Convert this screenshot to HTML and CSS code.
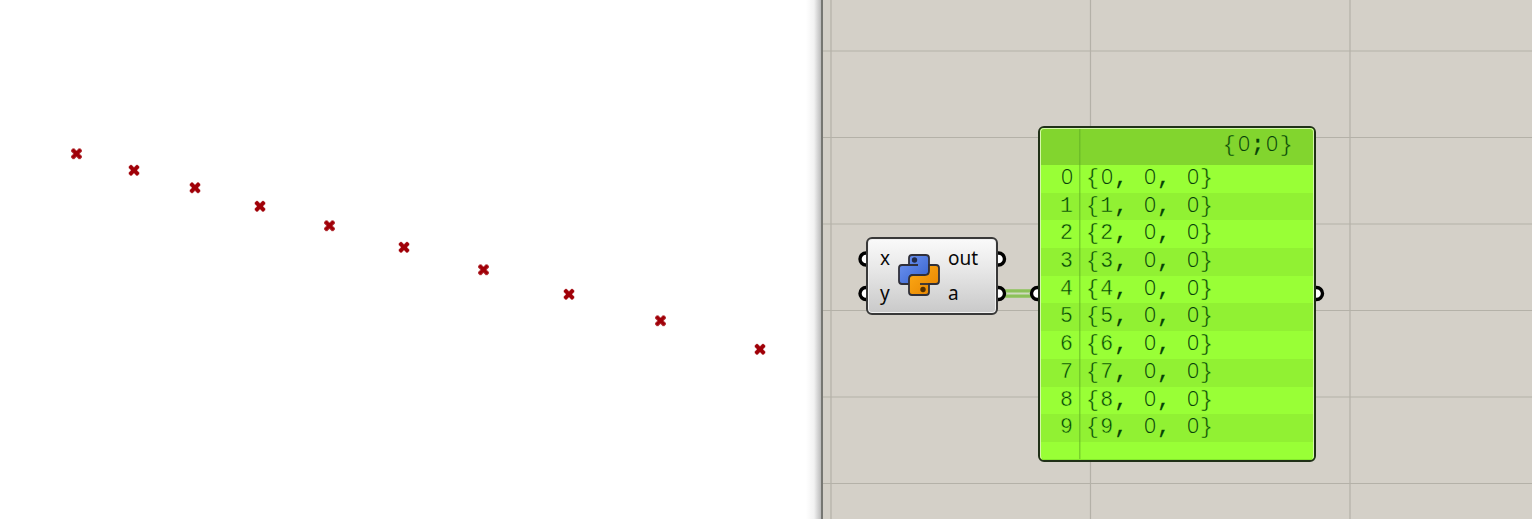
FILE: index.html
```html
<!DOCTYPE html>
<html lang="en">
<head>
<meta charset="utf-8">
<title>Point list</title>
<link rel="stylesheet" href="styles.css">
</head>
<body>
<main class="app">
<section class="viewport">
<svg width="821" height="519" viewBox="0 0 821 519">
<defs><path id="pt" class="point" d="M-4-5.500h2v1h1v1h2v-1h1v-1h2v1h1v2h-1v1h-1v2h1v1h1v2h-1v1h-2v-1h-1v-1h-2v1h-1v1h-2v-1h-1v-2h1v-1h1v-2h-1v-1h-1v-2h1z"/></defs>
<use href="#pt" x="76.500" y="154.300"/><use href="#pt" x="134" y="170.800"/><use href="#pt" x="195" y="188.300"/><use href="#pt" x="260" y="206.800"/><use href="#pt" x="329.500" y="226.300"/><use href="#pt" x="404" y="247.800"/><use href="#pt" x="483.500" y="270.300"/><use href="#pt" x="569" y="294.800"/><use href="#pt" x="660.500" y="321.300"/><use href="#pt" x="760" y="349.800"/>
</svg>
</section>
<section class="canvas">
<svg class="wires" width="711" height="519" viewBox="821 0 711 519">
<path class="grid" d="M821 51H1532M821 137.500H1532M821 224H1532M821 310.500H1532M821 397H1532M821 483.500H1532M831 0V519M1090.500 0V519M1350 0V519"/>
<path class="edge" d="M822 0V519"/>
<path class="gap" d="M1000 293.500H1036"/><path class="wire" d="M1000 290.900H1036M1000 296.100H1036"/>
<g class="port"><circle cx="866" cy="259" r="6"/><circle cx="866" cy="293.500" r="6"/><circle cx="998.500" cy="259" r="6"/><circle cx="998.500" cy="293.500" r="6"/><circle cx="1037.500" cy="293.500" r="6"/><circle cx="1316.500" cy="293.500" r="6"/></g>
</svg>
<div class="component">
<div class="params in"><span>x</span><span>y</span></div>
<svg class="logo" width="42" height="42" viewBox="0 0 42 42">
<defs><linearGradient id="blue" x2="1" y2="1"><stop stop-color="#7298f5"/><stop offset="1" stop-color="#3460cb"/></linearGradient><linearGradient id="gold" x2="1" y2="1"><stop stop-color="#ffad17"/><stop offset="1" stop-color="#e58200"/></linearGradient></defs>
<path fill="url(#blue)" d="M11 11V4Q11 1 14 1H28Q31 1 31 4V18Q31 21 28 21H15Q12 21 12 25V30H4Q1 30 1 27V14Q1 11 4 11H20"/>
<path fill="url(#gold)" d="M31 11H38Q41 11 41 14V27Q41 30 38 30H31V38Q31 41 28 41H14Q11 41 11 38V25Q11 21 15 21H27Q31 21 31 17Z"/>
<path class="seam" d="M22 30H31"/><circle cx="16.500" cy="6" r="2.700" fill="#222b48" stroke="none"/><circle cx="25" cy="35.500" r="2.700" fill="#553000" stroke="none"/>
</svg>
<div class="params"><span>out</span><span>a</span></div>
</div>
<div class="panel">
<div class="path">{<i>0</i><u>;</u><i>0</i>}</div>
<div class="row"><b><i>0</i></b><span>{<i>0</i><u>,</u> <i>0</i><u>,</u> <i>0</i>}</span></div>
<div class="row"><b>1</b><span>{1<u>,</u> <i>0</i><u>,</u> <i>0</i>}</span></div>
<div class="row"><b>2</b><span>{2<u>,</u> <i>0</i><u>,</u> <i>0</i>}</span></div>
<div class="row"><b>3</b><span>{3<u>,</u> <i>0</i><u>,</u> <i>0</i>}</span></div>
<div class="row"><b>4</b><span>{4<u>,</u> <i>0</i><u>,</u> <i>0</i>}</span></div>
<div class="row"><b>5</b><span>{5<u>,</u> <i>0</i><u>,</u> <i>0</i>}</span></div>
<div class="row"><b>6</b><span>{6<u>,</u> <i>0</i><u>,</u> <i>0</i>}</span></div>
<div class="row"><b>7</b><span>{7<u>,</u> <i>0</i><u>,</u> <i>0</i>}</span></div>
<div class="row"><b>8</b><span>{8<u>,</u> <i>0</i><u>,</u> <i>0</i>}</span></div>
<div class="row"><b>9</b><span>{9<u>,</u> <i>0</i><u>,</u> <i>0</i>}</span></div>
</div>
</section>
</main>
</body>
</html>
```
FILE: styles.css
```css
* { box-sizing: border-box; }
body { margin: 0; overflow: hidden; background: #fff; }
.app { display: grid; grid-template-columns: 821px 711px; height: 519px; }
.viewport { background: linear-gradient(90deg, #fff 806px, #f2f2f2 814px, #bbb 821px); }
svg { display: block; }
.point { fill: #a00008; stroke: #a00008; stroke-width: .5; }
.canvas { position: relative; background: #d4d0c8; }
.wires { position: absolute; inset: 0; }
.grid { stroke: #b4b1a8; stroke-width: 1.2; }
.edge { stroke: #767672; stroke-width: 2; }
.gap { stroke: #d0dac0; stroke-width: 8; }
.wire { stroke: #8cc159; stroke-width: 3.2; }
.port { fill: #fff; stroke: #000; stroke-width: 3.4; }
.component {
  position: absolute; left: 45px; top: 237px; width: 132px; height: 78px;
  display: grid; grid-template-columns: 30px 50px 1fr; padding-top: 2px;
  border: 2px solid #383838; border-radius: 6px;
  background: linear-gradient(#fafafa, #e8e8e8 40%, #c9c9c9);
  box-shadow: inset 0 0 0 1px #f0f0f0;
  font: 19px/34.500px "Noto Sans", sans-serif; color: #080808;
}
.params { display: flex; flex-direction: column; }
.params.in { padding-left: 12px; }
.logo { margin: 13px 0 0 -.5px; stroke: #30303a; stroke-width: 1.800; stroke-linejoin: round; }
.seam { fill: none; }
.panel {
  position: absolute; left: 217px; top: 126px; width: 278px; height: 336px;
  border: 2px solid #203018; border-radius: 6px; overflow: hidden;
  background: #99ff36; color: #064206;
  font: 21.500px/26px "Liberation Mono", monospace; letter-spacing: 1.350px;
  -webkit-text-stroke: .45px #96f935;
}
.panel::after {
  content: ""; position: absolute; inset: 0;
  border: 1.500px solid #d5f8aa; border-bottom-color: #83e82b; border-radius: 4px;
  background: linear-gradient(#5caa2288, #5caa2288) 38px 0 / 1.500px 100% no-repeat;
}
.path {
  height: 37px; padding: 4px 20px 0 0; background: #82d52e; text-align: right;
  -webkit-text-stroke-color: #82d52e;
}
.row { display: flex; height: 27.700px; }
.row:nth-child(odd) { background: #91f133; }
.row b { width: 40px; padding-left: 20px; font-weight: 400; }
.row span { padding-left: 6px; white-space: pre; }
.panel u { text-decoration: none; -webkit-text-stroke: .3px #064206; }
.panel i {
  display: inline-block; width: 14.250px; text-align: center; letter-spacing: 0;
  font: 300 20px/1 "Open Sans", sans-serif; color: #06400a;
  -webkit-text-stroke: .1px #06400a; transform: scaleX(1.06);
}
```
